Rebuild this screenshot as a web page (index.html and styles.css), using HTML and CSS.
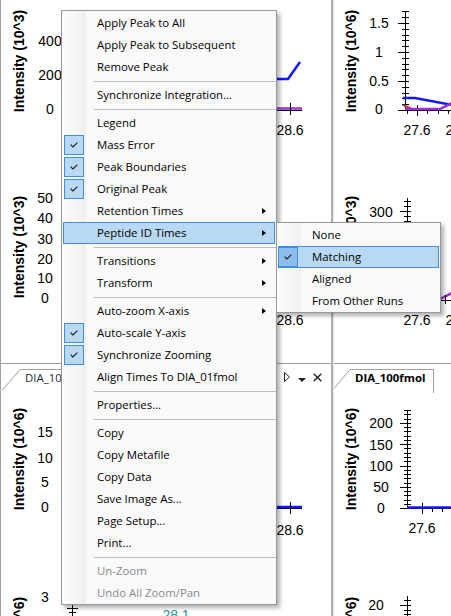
FILE: index.html
```html
<!DOCTYPE html>
<html>
<head>
<meta charset="utf-8">
<title>Chromatograms</title>
<link rel="stylesheet" href="styles.css">
</head>
<body>
<div class="workspace">
  <div class="pane pane-left">
    <div class="doc doc-upper">
      <svg class="chart" width="330" height="363" viewBox="1 0 330 363">
        <text class="yt" transform="translate(24 61) rotate(-90)">Intensity (10^3)</text>
        <text class="tl" x="50" y="46">400</text>
        <text class="tl" x="50" y="80">200</text>
        <text class="tl" x="50" y="114">0</text>
        <path class="ax" d="M74.5 12 V110.5 H302"/>
        <polyline class="ln-purple" points="74,108.5 302,108.5"/>
        <polyline class="ln-blue" points="240,79 288,79 300,62"/>
        <path class="ax" d="M290.5 103 V115"/>
        <text class="tl" x="290" y="135">28.6</text>

        <text class="yt" transform="translate(24 247) rotate(-90)">Intensity (10^3)</text>
        <text class="tl" x="45" y="203">50</text>
        <text class="tl" x="45" y="223">40</text>
        <text class="tl" x="45" y="244">30</text>
        <text class="tl" x="45" y="264">20</text>
        <text class="tl" x="45" y="283">10</text>
        <text class="tl" x="45" y="303">0</text>
        <path class="ax" d="M74.5 195 V299.5 H302"/>
        <polyline class="ln-purple" points="74,297.5 302,297.5"/>
        <path class="ax" d="M290.5 293 V305"/>
        <text class="tl" x="290" y="325">28.6</text>
      </svg>
    </div>
    <div class="tabstrip">
      <div class="tab tab-first">
        <svg class="tab-slant" width="18" height="24" viewBox="0 0 18 24"><path d="M0 21.5 L18 0.5" stroke="#a0a0a0" fill="none"/></svg>
        <span class="tab-label">DIA_10fmol</span>
      </div>
      <div class="tab-tools">
        <svg class="tool-next" width="6" height="10" viewBox="0 0 6 10"><path d="M0.5 0.5 L5.5 5 L0.5 9.5 Z" fill="none" stroke="#222"/></svg>
        <svg width="8" height="4" viewBox="0 0 8 4"><path d="M0 0 H8 L4 4 Z" fill="#222"/></svg>
        <svg width="9" height="9" viewBox="0 0 9 9"><path d="M0.7 0.7 L8.3 8.3 M8.3 0.7 L0.7 8.3" stroke="#222" stroke-width="1.4"/></svg>
      </div>
    </div>
    <div class="doc doc-lower">
      <svg class="chart" width="330" height="223" viewBox="1 393 330 223">
        <text class="yt" transform="translate(24 459) rotate(-90)">Intensity (10^6)</text>
        <text class="tl" x="45" y="437">15</text>
        <text class="tl" x="45" y="463">10</text>
        <text class="tl" x="45" y="487">5</text>
        <text class="tl" x="45" y="512">0</text>
        <path class="ax" d="M74.5 410 V508.5 H302"/>
        <polyline class="ln-blue" points="74,507 302,507"/>
        <path class="ax" d="M290.5 502 V514"/>
        <text class="tl" x="290" y="535">28.6</text>

        <text class="tl" x="45" y="602">3</text>
        <text class="yt" transform="translate(24 648) rotate(-90)">Intensity (10^6)</text>
        <path class="ax" d="M72.5 600 V616 M67 608.5 H78 M69 612.5 H76"/>
        <text class="tl teal" x="176" y="620">28.1</text>
      </svg>
    </div>
  </div>
  <div class="splitter"></div>
  <div class="pane pane-right">
    <div class="doc doc-upper">
      <svg class="chart" width="117" height="363" viewBox="334 0 117 363">
        <text class="yt" transform="translate(356 61) rotate(-90)">Intensity (10^6)</text>
        <text class="tl" x="379" y="28">1.5</text>
        <text class="tl" x="379" y="57">1</text>
        <text class="tl" x="379" y="86">0.5</text>
        <text class="tl" x="379" y="114">0</text>
        <path class="ax" d="M405.5 11 V110.5 H451"/>
        <path class="ax" d="M398 23.5 H409 M398 52.5 H409 M398 81.5 H409 M398 110.5 H409 M402 11.5 H409 M402 17.5 H409 M402 29.5 H409 M402 35.5 H409 M402 40.5 H409 M402 46.5 H409 M402 58.5 H409 M402 64.5 H409 M402 69.5 H409 M402 75.5 H409 M402 87.5 H409 M402 93.5 H409 M402 98.5 H409 M402 104.5 H409"/>
        <path class="ax" d="M417.5 105 V116 M407.5 110 V114 M427.5 110 V114 M438.5 110 V114 M448.5 110 V114"/>
        <polyline class="ln-blue" points="403,98 415,98 452,105"/>
        <polyline class="ln-red" points="403,105 413,109.5"/>
        <polyline class="ln-purple" points="405,109 440,109 452,103"/>
        <text class="tl" x="417" y="135">27.6</text>
        <text class="tl" x="459" y="135">27.8</text>

        <text class="yt" transform="translate(356 247) rotate(-90)">Intensity (10^3)</text>
        <text class="tl" x="381" y="217">300</text>
        <path class="ax" d="M407.5 198 V300.5 H451"/>
        <path class="ax" d="M400 211.5 H411 M404 201.5 H411 M404 206.5 H411 M404 216.5 H411 M404 221.5 H411 M404 226.5 H411"/>
        <polyline class="ln-purple" points="407,299 440,299 452,293"/>
        <path class="ax" d="M445.5 295 V304"/>
        <text class="tl" x="417" y="325">27.6</text>
        <text class="tl" x="459" y="325">27.8</text>
      </svg>
    </div>
    <div class="tabstrip">
      <div class="tab tab-active">
        <svg class="tab-slant" width="16" height="24" viewBox="0 0 16 24"><path d="M0 19.5 L16 0.5" stroke="#a0a0a0" fill="none"/></svg>
        <span class="tab-label">DIA_100fmol</span>
      </div>
    </div>
    <div class="doc doc-lower">
      <svg class="chart" width="117" height="223" viewBox="334 393 117 223">
        <text class="yt" transform="translate(356 459) rotate(-90)">Intensity (10^6)</text>
        <text class="tl" x="381" y="428">200</text>
        <text class="tl" x="381" y="450">150</text>
        <text class="tl" x="381" y="471">100</text>
        <text class="tl" x="381" y="492">50</text>
        <text class="tl" x="381" y="513">0</text>
        <path class="ax" d="M407.5 410 V508.5 H451"/>
        <path class="ax" d="M400 423.5 H411 M400 444.5 H411 M400 466.5 H411 M400 487.5 H411 M400 508.5 H411"/>
        <path class="ax" d="M404 410.5 H411 M404 414.5 H411 M404 419.5 H411 M404 427.5 H411 M404 431.5 H411 M404 436.5 H411 M404 440.5 H411 M404 448.5 H411 M404 453.5 H411 M404 457.5 H411 M404 461.5 H411 M404 470.5 H411 M404 474.5 H411 M404 478.5 H411 M404 483.5 H411 M404 491.5 H411 M404 495.5 H411 M404 500.5 H411 M404 504.5 H411"/>
        <polyline class="ln-blue" points="407,507.5 451,507.5"/>
        <path class="ax" d="M422.5 503 V514 M432.5 508 V512 M442.5 508 V512"/>
        <text class="tl" x="422" y="533">27.6</text>

        <text class="tl" x="376" y="610">20</text>
        <path class="ax" d="M407.5 596 V616 M400 605.5 H411 M404 600.5 H411 M404 610.5 H411 M404 614.5 H411"/>
        <text class="yt" transform="translate(356 648) rotate(-90)">Intensity (10^6)</text>
      </svg>
    </div>
  </div>
</div>

<div class="menu">
  <div class="mi"><span class="ico"></span><span class="lbl">Apply Peak to All</span></div>
  <div class="mi"><span class="ico"></span><span class="lbl">Apply Peak to Subsequent</span></div>
  <div class="mi"><span class="ico"></span><span class="lbl">Remove Peak</span></div>
  <div class="sep"></div>
  <div class="mi"><span class="ico"></span><span class="lbl">Synchronize Integration...</span></div>
  <div class="sep"></div>
  <div class="mi"><span class="ico"></span><span class="lbl">Legend</span></div>
  <div class="mi"><span class="ico chk"><svg width="8" height="6" viewBox="0 0 8 6"><path d="M0.6 2.6 L2.9 4.9 L7.4 0.6" fill="none" stroke="#1a1a1a" stroke-width="1.1"/></svg></span><span class="lbl">Mass Error</span></div>
  <div class="mi"><span class="ico chk"><svg width="8" height="6" viewBox="0 0 8 6"><path d="M0.6 2.6 L2.9 4.9 L7.4 0.6" fill="none" stroke="#1a1a1a" stroke-width="1.1"/></svg></span><span class="lbl">Peak Boundaries</span></div>
  <div class="mi"><span class="ico chk"><svg width="8" height="6" viewBox="0 0 8 6"><path d="M0.6 2.6 L2.9 4.9 L7.4 0.6" fill="none" stroke="#1a1a1a" stroke-width="1.1"/></svg></span><span class="lbl">Original Peak</span></div>
  <div class="mi"><span class="ico"></span><span class="lbl">Retention Times</span><span class="sub"></span></div>
  <div class="mi hot"><span class="ico"></span><span class="lbl">Peptide ID Times</span><span class="sub"></span></div>
  <div class="sep"></div>
  <div class="mi"><span class="ico"></span><span class="lbl">Transitions</span><span class="sub"></span></div>
  <div class="mi"><span class="ico"></span><span class="lbl">Transform</span><span class="sub"></span></div>
  <div class="sep"></div>
  <div class="mi"><span class="ico"></span><span class="lbl">Auto-zoom X-axis</span><span class="sub"></span></div>
  <div class="mi"><span class="ico chk"><svg width="8" height="6" viewBox="0 0 8 6"><path d="M0.6 2.6 L2.9 4.9 L7.4 0.6" fill="none" stroke="#1a1a1a" stroke-width="1.1"/></svg></span><span class="lbl">Auto-scale Y-axis</span></div>
  <div class="mi"><span class="ico chk"><svg width="8" height="6" viewBox="0 0 8 6"><path d="M0.6 2.6 L2.9 4.9 L7.4 0.6" fill="none" stroke="#1a1a1a" stroke-width="1.1"/></svg></span><span class="lbl">Synchronize Zooming</span></div>
  <div class="mi"><span class="ico"></span><span class="lbl">Align Times To DIA_01fmol</span></div>
  <div class="sep"></div>
  <div class="mi"><span class="ico"></span><span class="lbl">Properties...</span></div>
  <div class="sep"></div>
  <div class="mi"><span class="ico"></span><span class="lbl">Copy</span></div>
  <div class="mi"><span class="ico"></span><span class="lbl">Copy Metafile</span></div>
  <div class="mi"><span class="ico"></span><span class="lbl">Copy Data</span></div>
  <div class="mi"><span class="ico"></span><span class="lbl">Save Image As...</span></div>
  <div class="mi"><span class="ico"></span><span class="lbl">Page Setup...</span></div>
  <div class="mi"><span class="ico"></span><span class="lbl">Print...</span></div>
  <div class="sep"></div>
  <div class="mi dis"><span class="ico"></span><span class="lbl">Un-Zoom</span></div>
  <div class="mi dis"><span class="ico"></span><span class="lbl">Undo All Zoom/Pan</span></div>
</div>

<div class="menu submenu">
  <div class="mi"><span class="ico"></span><span class="lbl">None</span></div>
  <div class="mi hot"><span class="ico chk"><svg width="8" height="6" viewBox="0 0 8 6"><path d="M0.6 2.6 L2.9 4.9 L7.4 0.6" fill="none" stroke="#1a1a1a" stroke-width="1.1"/></svg></span><span class="lbl">Matching</span></div>
  <div class="mi"><span class="ico"></span><span class="lbl">Aligned</span></div>
  <div class="mi"><span class="ico"></span><span class="lbl">From Other Runs</span></div>
</div>
</body>
</html>
```
FILE: styles.css
```css
html, body {
  margin: 0;
  padding: 0;
}
body {
  width: 451px;
  height: 616px;
  overflow: hidden;
  background: #ffffff;
  position: relative;
  font-family: "Liberation Sans", Arial, sans-serif;
}
.workspace {
  display: flex;
  width: 451px;
  height: 616px;
}
.pane {
  display: flex;
  flex-direction: column;
  overflow: hidden;
  background: #ffffff;
}
.pane-left {
  width: 330px;
  border-left: 1px solid #a0a0a0;
  flex: none;
}
.splitter {
  width: 2px;
  flex: none;
  background: #b0b0b0;
  border-right: 1px solid #e6e6e6;
}
.pane-right {
  flex: 1;
}
.doc-upper {
  height: 363px;
  flex: none;
}
.doc-lower {
  flex: 1;
  overflow: hidden;
}
.chart {
  display: block;
}
.chart text {
  font-family: "Liberation Sans", Arial, sans-serif;
  font-size: 14px;
  fill: #000000;
}
.chart .yt {
  font-weight: bold;
  text-anchor: middle;
}
.chart .tl {
  text-anchor: middle;
}
.chart .teal {
  fill: #2a9494;
}
.ax {
  fill: none;
  stroke: #000000;
  stroke-width: 1;
}
.ln-blue {
  fill: none;
  stroke: #1414ff;
  stroke-width: 2.5;
}
.ln-purple {
  fill: none;
  stroke: #9a32d8;
  stroke-width: 2.5;
}
.ln-red {
  fill: none;
  stroke: #b03a3a;
  stroke-width: 2;
}

/* tab strip */
.tabstrip {
  height: 29px;
  flex: none;
  border-top: 1px solid #a0a0a0;
  display: flex;
  align-items: flex-end;
  background: #ffffff;
}
.tab {
  display: flex;
  height: 24px;
}
.tab-first {
  margin-left: 1px;
}
.tab-slant {
  display: block;
  flex: none;
}
.tab-label {
  box-sizing: border-box;
  height: 24px;
  border-top: 1px solid #a0a0a0;
  border-right: 1px solid #a0a0a0;
  padding: 0 8px 0 5px;
  font-family: "Open Sans", "Noto Sans", sans-serif;
  font-size: 11.4px;
  line-height: 16px;
  color: #1e1e3a;
  white-space: nowrap;
}
.tab-active .tab-label {
  font-weight: bold;
  color: #000000;
}
.tab-tools {
  margin-left: auto;
  align-self: flex-start;
  margin-top: 8px;
  height: 10px;
  display: flex;
  align-items: flex-end;
  gap: 7px;
  padding-right: 9px;
}
.tab-tools svg {
  display: block;
}
.tool-next {
  margin-right: 1px;
}

/* context menu */
.menu {
  position: absolute;
  left: 61px;
  top: 10px;
  width: 214px;
  padding-top: 1px;
  border: 1px solid #979797;
  box-shadow: 3px 3px 4px rgba(0, 0, 0, 0.3);
  background: linear-gradient(90deg, #fdfdfd, #efefef) 0 0 / 24px 100% no-repeat, #f9f9f9;
  font-family: "Open Sans", "Noto Sans", sans-serif;
  font-size: 11.4px;
  color: #000000;
}
.submenu {
  left: 276px;
  top: 222px;
  width: 163px;
}
.mi {
  display: flex;
  align-items: center;
  height: 22px;
  margin: 0 1px;
}
.ico {
  flex: none;
  box-sizing: border-box;
  width: 20px;
  height: 20px;
  margin: 0 13px 0 1px;
  display: flex;
  align-items: center;
  justify-content: center;
}
.ico svg {
  display: block;
}
.submenu .ico {
  margin: 0 14px 0 0;
}
.chk {
  background: #b8d8f4;
  border: 1px solid #3d8fe0;
}
.hot {
  background: #b8d8f4;
  box-shadow: inset 0 0 0 1px #3d8fe0;
}
.hot .chk {
  background: #8dbdec;
}
.lbl {
  white-space: nowrap;
  line-height: 22px;
}
.sub {
  margin-left: auto;
  margin-right: 9px;
  width: 0;
  height: 0;
  border-left: 4px solid #000000;
  border-top: 3.5px solid transparent;
  border-bottom: 3.5px solid transparent;
}
.sep {
  height: 1px;
  margin: 3px 0 2px 32px;
  background: #bdbdbd;
}
.dis {
  color: #8a8a8a;
}
```
